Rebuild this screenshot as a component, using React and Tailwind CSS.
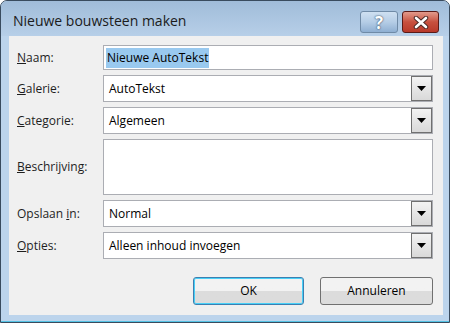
import React from "react"

const FONT = { fontFamily: '"Open Sans", "Noto Sans", "Liberation Sans", sans-serif' }

function Combo({ value }) {
  return (
    <div className="flex-1 h-[27px] flex items-center border border-[#abadb3] bg-white">
      <span className="flex-1 pl-[5px] text-[12px] text-black">{value}</span>
      <div className="w-[21px] h-[25px] flex items-center justify-center border border-[#707070] bg-gradient-to-b from-[#f3f3f3] to-[#d9d9d9]">
        <svg width="9" height="5" viewBox="0 0 9 5">
          <path d="M0 0 H9 L4.5 5 Z" fill="#000" />
        </svg>
      </div>
    </div>
  )
}

function Label({ children }) {
  return <div className="w-[86px] text-[12px] text-[#1e1e1e]">{children}</div>
}

export default function App() {
  return (
    <div className="w-[450px] h-[323px] flex flex-col overflow-hidden rounded-t-[7px] border border-[#394b5e] bg-[#bcd4ec] shadow-[inset_0_-1px_0_#54c2e4]" style={FONT}>
      {/* titelbalk */}
      <div className="h-[35px] flex items-start bg-gradient-to-b from-[#a0bcd9] to-[#b7cfe8]">
        <div className="flex-1 pl-[12px] pt-[9px] text-[14px] text-[#1b1b1b]">Nieuwe bouwsteen maken</div>
        <div className="flex gap-[4px] mt-[10px] mr-[10px]">
          <div className="w-[38px] h-[22px] flex items-center justify-center rounded-[3px] border border-[#6f8aa6] bg-gradient-to-b from-[#cfe0f1] via-[#b5cde6] to-[#8fafd2]">
            <span className="text-[17px] font-bold leading-none text-white [text-shadow:0_0_1px_#38506b,0_0_2px_#38506b]">?</span>
          </div>
          <div className="w-[37px] h-[22px] flex items-center justify-center rounded-[3px] border border-[#5a1b18] bg-gradient-to-b from-[#e19a8c] via-[#c7503f] to-[#b8392a]">
            <svg width="16" height="13" viewBox="0 0 16 13">
              <path d="M3 2 L13 11 M13 2 L3 11" stroke="#4a2a28" strokeWidth="4.5" strokeLinecap="round" />
              <path d="M3 2 L13 11 M13 2 L3 11" stroke="#fff" strokeWidth="2.6" strokeLinecap="round" />
            </svg>
          </div>
        </div>
      </div>

      {/* inhoud */}
      <div className="flex-1 ml-[8px] mr-[6px] mb-[7px] bg-[#f0f0f0] pl-[8px] pr-[10px] pt-[9px] pb-[10px] flex flex-col">
        <div className="flex items-center">
          <Label><u>N</u>aam:</Label>
          <div className="flex-1 h-[25px] flex items-center border border-[#abadb3] bg-white pl-[2px]">
            <span className="text-[12px] text-black bg-[#99c9ef] px-[1px] leading-[20px]">Nieuwe AutoTekst</span>
          </div>
        </div>
        <div className="flex items-center mt-[5px]">
          <Label><u>G</u>alerie:</Label>
          <Combo value="AutoTekst" />
        </div>
        <div className="flex items-center mt-[5px]">
          <Label><u>C</u>ategorie:</Label>
          <Combo value="Algemeen" />
        </div>
        <div className="flex items-center mt-[5px]">
          <Label><u>B</u>eschrijving:</Label>
          <div className="flex-1 h-[56px] border border-[#abadb3] bg-white" />
        </div>
        <div className="flex items-center mt-[5px]">
          <Label>Opslaan <u>i</u>n:</Label>
          <Combo value="Normal" />
        </div>
        <div className="flex items-center mt-[5px]">
          <Label><u>O</u>pties:</Label>
          <Combo value="Alleen inhoud invoegen" />
        </div>
        <div className="flex justify-end gap-[16px] mt-auto">
          <button className="w-[111px] h-[28px] rounded-[3px] border border-[#3c7fb1] bg-gradient-to-b from-[#f2f2f2] from-50% to-[#dcdcdc] to-50% text-[12px] text-black shadow-[inset_0_0_0_1px_#48d0f7]">
            OK
          </button>
          <button className="w-[113px] h-[28px] rounded-[3px] border border-[#707070] bg-gradient-to-b from-[#f2f2f2] from-50% to-[#dcdcdc] to-50% text-[12px] text-black">
            Annuleren
          </button>
        </div>
      </div>
    </div>
  )
}
